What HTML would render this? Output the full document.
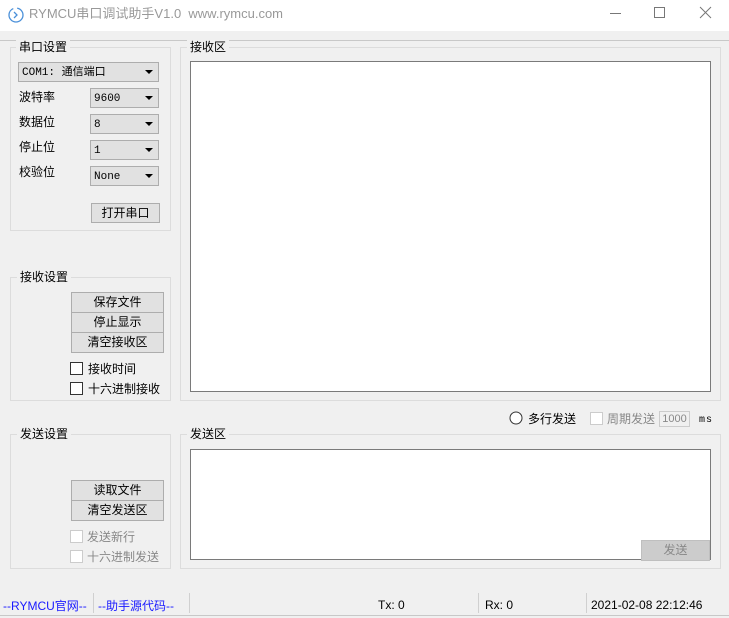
<!DOCTYPE html>
<html><head><meta charset="utf-8"><style>
*{margin:0;padding:0;box-sizing:border-box}
body{width:729px;height:618px;background:#f0f0f0;font-family:"Liberation Sans","Noto Sans CJK SC",sans-serif;font-size:12px;color:#000;position:relative;overflow:hidden}
.a{position:absolute}
.title{left:0;top:0;width:729px;height:31px;background:#fff}
.grp{position:absolute;border:1px solid #dcdcdc}
.lg{position:absolute;background:#f0f0f0;padding:0 3px;font-size:12px;line-height:14px}
.ta{position:absolute;background:#fff;border:1px solid #7a7a7a}
.cb{position:absolute;background:#e1e1e1;border:1px solid #adadad;font-size:11px;line-height:20px;padding-left:3px;font-family:"Liberation Mono","Noto Sans CJK SC",monospace}
.cb:after{content:"";position:absolute;right:5px;top:7px;border-left:4px solid transparent;border-right:4px solid transparent;border-top:4px solid #000}
.btn{position:absolute;background:#e1e1e1;border:1px solid #adadad;text-align:center;font-size:12px;line-height:18px}
.chk{position:absolute;width:13px;height:13px;border:1px solid #333;background:#fff}
.chk.d{border-color:#ccc}
.lbl{position:absolute;font-size:12px;line-height:14px}
.g{color:#888}
</style></head><body>
<div class="a title"></div>
<svg class="a" style="left:7px;top:6px" width="18" height="18" viewBox="0 0 18 18"><circle cx="9" cy="9" r="7" fill="none" stroke="#4a90d9" stroke-width="1.3" stroke-dasharray="30 4"/><path d="M7 6 L10 9 L7 12" fill="none" stroke="#4a90d9" stroke-width="1.3"/></svg>
<div class="a" style="left:29px;top:6px;font-size:13px;color:#999;line-height:16px">RYMCU串口调试助手V1.0 &nbsp;www.rymcu.com</div>
<div class="a" style="left:610px;top:13px;width:11px;height:1px;background:#777"></div>
<div class="a" style="left:654px;top:7px;width:11px;height:11px;border:1px solid #777"></div>
<svg class="a" style="left:699px;top:6px" width="13" height="13"><path d="M1 1L12 12M12 1L1 12" stroke="#777" stroke-width="1"/></svg>
<div class="a" style="left:0;top:40px;width:729px;height:1px;background:#c8c8c8"></div>

<div class="grp" style="left:10px;top:47px;width:161px;height:184px"></div><div class="lg" style="left:16px;top:40px">串口设置</div>
<div class="grp" style="left:180px;top:47px;width:541px;height:354px"></div><div class="lg" style="left:187px;top:40px">接收区</div>
<div class="ta" style="left:190px;top:61px;width:521px;height:331px"></div>

<div class="cb" style="left:18px;top:62px;width:141px;height:20px">COM1: 通信端口</div>
<div class="lbl" style="left:19px;top:90px">波特率</div><div class="cb" style="left:90px;top:88px;width:69px;height:20px">9600</div>
<div class="lbl" style="left:19px;top:115px">数据位</div><div class="cb" style="left:90px;top:114px;width:69px;height:20px">8</div>
<div class="lbl" style="left:19px;top:140px">停止位</div><div class="cb" style="left:90px;top:140px;width:69px;height:20px">1</div>
<div class="lbl" style="left:19px;top:165px">校验位</div><div class="cb" style="left:90px;top:166px;width:69px;height:20px">None</div>
<div class="btn" style="left:91px;top:203px;width:69px;height:20px">打开串口</div>

<div class="grp" style="left:10px;top:277px;width:161px;height:124px"></div><div class="lg" style="left:17px;top:270px">接收设置</div>
<div class="btn" style="left:71px;top:292px;width:93px;height:21px">保存文件</div>
<div class="btn" style="left:71px;top:312px;width:93px;height:21px">停止显示</div>
<div class="btn" style="left:71px;top:332px;width:93px;height:21px">清空接收区</div>
<div class="chk" style="left:70px;top:362px"></div><div class="lbl" style="left:88px;top:362px">接收时间</div>
<div class="chk" style="left:70px;top:382px"></div><div class="lbl" style="left:88px;top:382px">十六进制接收</div>

<svg class="a" style="left:509px;top:411px" width="14" height="14"><circle cx="7" cy="7" r="6" fill="#fff" stroke="#333"/></svg>
<div class="lbl" style="left:528px;top:412px">多行发送</div>
<div class="chk d" style="left:590px;top:412px"></div><div class="lbl g" style="left:607px;top:412px">周期发送</div>
<div class="a" style="left:659px;top:411px;width:31px;height:16px;border:1px solid #ccc;background:#f0f0f0;color:#888;font-size:11px;line-height:14px;text-align:center">1000</div>
<div class="a" style="left:699px;top:415px;font-size:10px;font-family:'Liberation Mono',monospace;letter-spacing:1px">ms</div>

<div class="grp" style="left:10px;top:434px;width:161px;height:135px"></div><div class="lg" style="left:17px;top:427px">发送设置</div>
<div class="grp" style="left:180px;top:434px;width:541px;height:135px"></div><div class="lg" style="left:187px;top:427px">发送区</div>
<div class="ta" style="left:190px;top:449px;width:521px;height:111px"></div>
<div class="btn g" style="left:641px;top:540px;width:69px;height:21px;background:#ccc;border-color:#bfbfbf;color:#888">发送</div>
<div class="btn" style="left:71px;top:480px;width:93px;height:21px">读取文件</div>
<div class="btn" style="left:71px;top:500px;width:93px;height:21px">清空发送区</div>
<div class="chk d" style="left:70px;top:530px"></div><div class="lbl g" style="left:87px;top:530px">发送新行</div>
<div class="chk d" style="left:70px;top:550px"></div><div class="lbl g" style="left:87px;top:550px">十六进制发送</div>

<div class="a" style="left:3px;top:597px;color:#1a1aff;font-size:12px">--RYMCU官网--</div>
<div class="a" style="left:93px;top:593px;width:1px;height:20px;background:#d0d0d0"></div>
<div class="a" style="left:98px;top:597px;color:#1a1aff;font-size:12px">--助手源代码--</div>
<div class="a" style="left:189px;top:593px;width:1px;height:20px;background:#d0d0d0"></div>
<div class="a" style="left:378px;top:598px;font-size:12px">Tx: 0</div>
<div class="a" style="left:478px;top:593px;width:1px;height:20px;background:#d0d0d0"></div>
<div class="a" style="left:485px;top:598px;font-size:12px">Rx: 0</div>
<div class="a" style="left:586px;top:593px;width:1px;height:20px;background:#d0d0d0"></div>
<div class="a" style="left:591px;top:598px;font-size:12px">2021-02-08 22:12:46</div>
<div class="a" style="left:0;top:615px;width:729px;height:1px;background:#c8c8c8"></div>
</body></html>
